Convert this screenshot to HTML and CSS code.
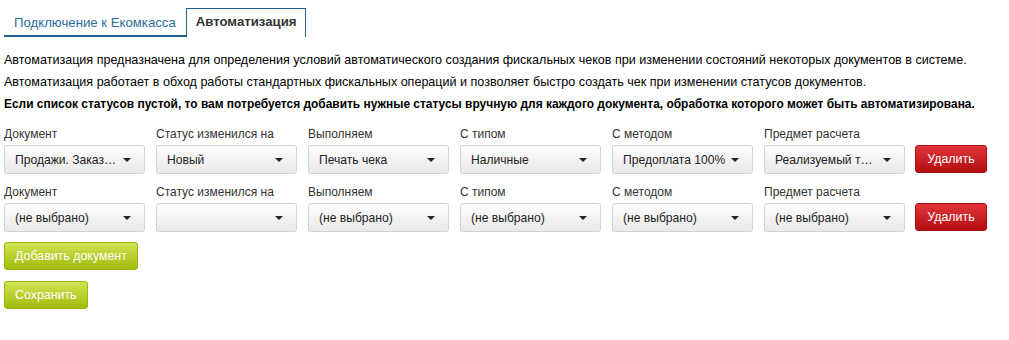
FILE: index.html
```html
<!DOCTYPE html>
<html lang="ru">
<head>
  <meta charset="UTF-8" />
  <title>Автоматизация</title>
  <link rel="stylesheet" href="styles.css">
</head>
<body>
  <div class="page">
    <ul class="tabs">
      <li class="tab">Подключение к Екомкасса</li>
      <li class="tab active">Автоматизация</li>
    </ul>

    <div class="intro">
      <p>Автоматизация предназначена для определения условий автоматического создания фискальных чеков при изменении состояний некоторых документов в системе.</p>
      <p>Автоматизация работает в обход работы стандартных фискальных операций и позволяет быстро создать чек при изменении статусов документов.</p>
      <p class="strong">Если список статусов пустой, то вам потребуется добавить нужные статусы вручную для каждого документа, обработка которого может быть автоматизирована.</p>
    </div>

    <div class="rule">
      <div class="field">
        <label>Документ</label>
        <div class="select"><span>Продажи. Заказ покупателя</span><i></i></div>
      </div>
      <div class="field">
        <label>Статус изменился на</label>
        <div class="select"><span>Новый</span><i></i></div>
      </div>
      <div class="field">
        <label>Выполняем</label>
        <div class="select"><span>Печать чека</span><i></i></div>
      </div>
      <div class="field">
        <label>С типом</label>
        <div class="select"><span>Наличные</span><i></i></div>
      </div>
      <div class="field">
        <label>С методом</label>
        <div class="select"><span>Предоплата 100%</span><i></i></div>
      </div>
      <div class="field">
        <label>Предмет расчета</label>
        <div class="select"><span>Реализуемый товар</span><i></i></div>
      </div>
      <button class="btn-red">Удалить</button>
    </div>

    <div class="rule">
      <div class="field">
        <label>Документ</label>
        <div class="select"><span>(не выбрано)</span><i></i></div>
      </div>
      <div class="field">
        <label>Статус изменился на</label>
        <div class="select"><span></span><i></i></div>
      </div>
      <div class="field">
        <label>Выполняем</label>
        <div class="select"><span>(не выбрано)</span><i></i></div>
      </div>
      <div class="field">
        <label>С типом</label>
        <div class="select"><span>(не выбрано)</span><i></i></div>
      </div>
      <div class="field">
        <label>С методом</label>
        <div class="select"><span>(не выбрано)</span><i></i></div>
      </div>
      <div class="field">
        <label>Предмет расчета</label>
        <div class="select"><span>(не выбрано)</span><i></i></div>
      </div>
      <button class="btn-red">Удалить</button>
    </div>

    <div class="actions">
      <button class="btn-green">Добавить документ</button>
      <button class="btn-green">Сохранить</button>
    </div>
  </div>
</body>
</html>
```

FILE: styles.css
```css
body {
  margin: 0;
  font-family: "Liberation Sans", Arial, sans-serif;
  font-size: 12px;
  color: #000;
  background: #fff;
}

.page {
  padding: 8px 4px;
}

.tabs {
  list-style: none;
  margin: 0;
  padding: 0;
  display: flex;
  align-items: flex-end;
}

.tab {
  font-size: 13.2px;
  color: #2a6d9c;
  padding: 5px 10px 5px 10px;
  border-bottom: 2px solid #1f6290;
}

.tab.active {
  color: #333;
  font-weight: bold;
  border: 1px solid #1f6290;
  border-bottom: none;
  padding: 5px 9px 8px 9px;
}

.intro {
  margin-top: 16px;
}

.intro p {
  margin: 0 0 8px 0;
  font-size: 12.55px;
  line-height: 14px;
}

.intro .strong {
  font-weight: bold;
  font-size: 11.95px;
}

.rule {
  display: flex;
  align-items: flex-end;
  gap: 11px;
  margin-top: 16px;
}

.rule + .rule {
  margin-top: 11px;
}

.field {
  width: 141px;
}

.field label {
  display: block;
  color: #333;
  margin-bottom: 4px;
  line-height: 14px;
}

.select {
  height: 29px;
  box-sizing: border-box;
  border: 1px solid #d3d3d3;
  border-radius: 3px;
  background: linear-gradient(#fdfdfd, #e9e9e9);
  display: flex;
  align-items: center;
  padding: 0 13px 0 10px;
  color: #222;
  font-size: 12.1px;
}

.select span {
  flex: 1;
  white-space: nowrap;
  overflow: hidden;
  text-overflow: ellipsis;
  margin-right: 4px;
}

.select i {
  width: 0;
  height: 0;
  border-left: 4px solid transparent;
  border-right: 4px solid transparent;
  border-top: 4px solid #222;
}

.btn-red {
  width: 72px;
  height: 28px;
  margin-bottom: 1px;
  margin-left: -1px;
  border: 1px solid #a80d10;
  border-radius: 3px;
  background: linear-gradient(#e0353a, #b30e12);
  color: #fff;
  font-family: inherit;
  font-size: 12.4px;
  cursor: pointer;
}

.actions {
  display: flex;
  flex-direction: column;
  align-items: flex-start;
  gap: 11px;
  margin-top: 10px;
}

.btn-green {
  height: 28px;
  padding: 0 10px;
  border: 1px solid #9db50a;
  border-radius: 3px;
  background: linear-gradient(#d1e354, #a2bb0b);
  color: #fff;
  font-family: inherit;
  font-size: 12.4px;
  cursor: pointer;
}
```
